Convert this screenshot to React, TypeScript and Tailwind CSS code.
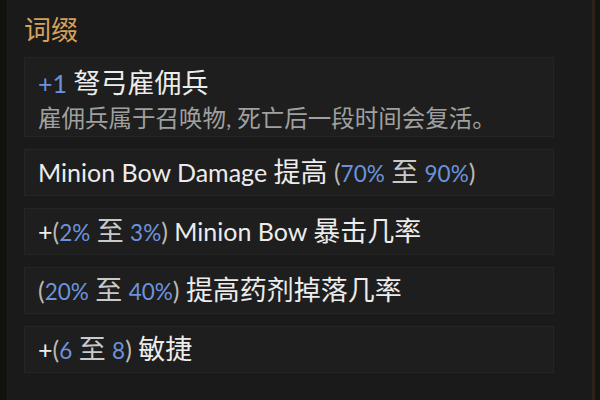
import React from 'react';

type Part = { t: string; c?: 'v' | 'p' | 'n' };

const font = { fontFamily: '"Lato", "Noto Sans CJK SC", sans-serif' };

const rows: Part[][] = [
  [{ t: 'Minion Bow Damage 提高 ' }, { t: '(', c: 'p' }, { t: '70%', c: 'v' }, { t: ' 至 ', c: 'n' }, { t: '90%', c: 'v' }, { t: ')', c: 'p' }],
  [{ t: '+' }, { t: '(', c: 'p' }, { t: '2%', c: 'v' }, { t: ' 至 ', c: 'n' }, { t: '3%', c: 'v' }, { t: ')', c: 'p' }, { t: ' Minion Bow 暴击几率' }],
  [{ t: '(', c: 'p' }, { t: '20%', c: 'v' }, { t: ' 至 ', c: 'n' }, { t: '40%', c: 'v' }, { t: ')', c: 'p' }, { t: ' 提高药剂掉落几率' }],
  [{ t: '+' }, { t: '(', c: 'p' }, { t: '6', c: 'v' }, { t: ' 至 ', c: 'n' }, { t: '8', c: 'v' }, { t: ')', c: 'p' }, { t: ' 敏捷' }],
];

function partClass(c?: Part['c']) {
  if (c === 'v') return 'text-[#6b93dc] text-[22.5px]';
  if (c === 'p') return 'text-[#bdb8b0]';
  if (c === 'n') return 'text-[#c9c9c9]';
  return 'text-[#ececec]';
}

// CJK glyphs sit a little larger than the latin ones in the game font
function Mixed({ text }: { text: string }) {
  const runs = text.split(/([\u3000-\u9fff\uff00-\uffef]+)/).filter(Boolean);
  return (
    <>
      {runs.map((r, i) =>
        /[\u3000-\u9fff\uff00-\uffef]/.test(r) ? (
          <span key={i} className="text-[27px]">{r}</span>
        ) : (
          <span key={i}>{r}</span>
        )
      )}
    </>
  );
}

export default function App() {
  return (
    <div className="flex h-[400px] w-[600px] bg-[#1a1a1a]" style={font}>
      <div className="w-[8px] border-r border-[#221d16] bg-[#14120f]" />
      <div className="flex flex-1 flex-col px-4 pt-[15px]">
        <h2 className="text-[27px] leading-[30px] text-[#d6a05a]">词缀</h2>
        <div className="mt-[12px] mr-[3px] flex flex-col gap-[12px]">
          <div className="h-[80px] border border-[#252525] bg-[#1e1e1e] px-[13px] pt-[9px]">
            <div className="text-[25px] leading-[32px] whitespace-pre text-[#ececec]">
              <span className="text-[#6b93dc]">+1</span> <Mixed text="弩弓雇佣兵" />
            </div>
            <div className="mt-[4px] text-[23.5px] leading-[30px] whitespace-nowrap text-[#a0a0a0]">
              雇佣兵属于召唤物, 死亡后一段时间会复活。
            </div>
          </div>
          {rows.map((r, i) => (
            <div key={i} className="flex h-[47px] items-center border border-[#252525] bg-[#1e1e1e] px-[13px]">
              <div className="text-[25px] leading-[32px] whitespace-pre">
                {r.map((p, j) => (
                  <span key={j} className={partClass(p.c)}>
                    <Mixed text={p.t} />
                  </span>
                ))}
              </div>
            </div>
          ))}
        </div>
      </div>
      <div className="w-[19px]" />
      <div className="w-[3px] bg-[#2c2219]" />
      <div className="w-[5px] bg-[#161412]" />
    </div>
  );
}
